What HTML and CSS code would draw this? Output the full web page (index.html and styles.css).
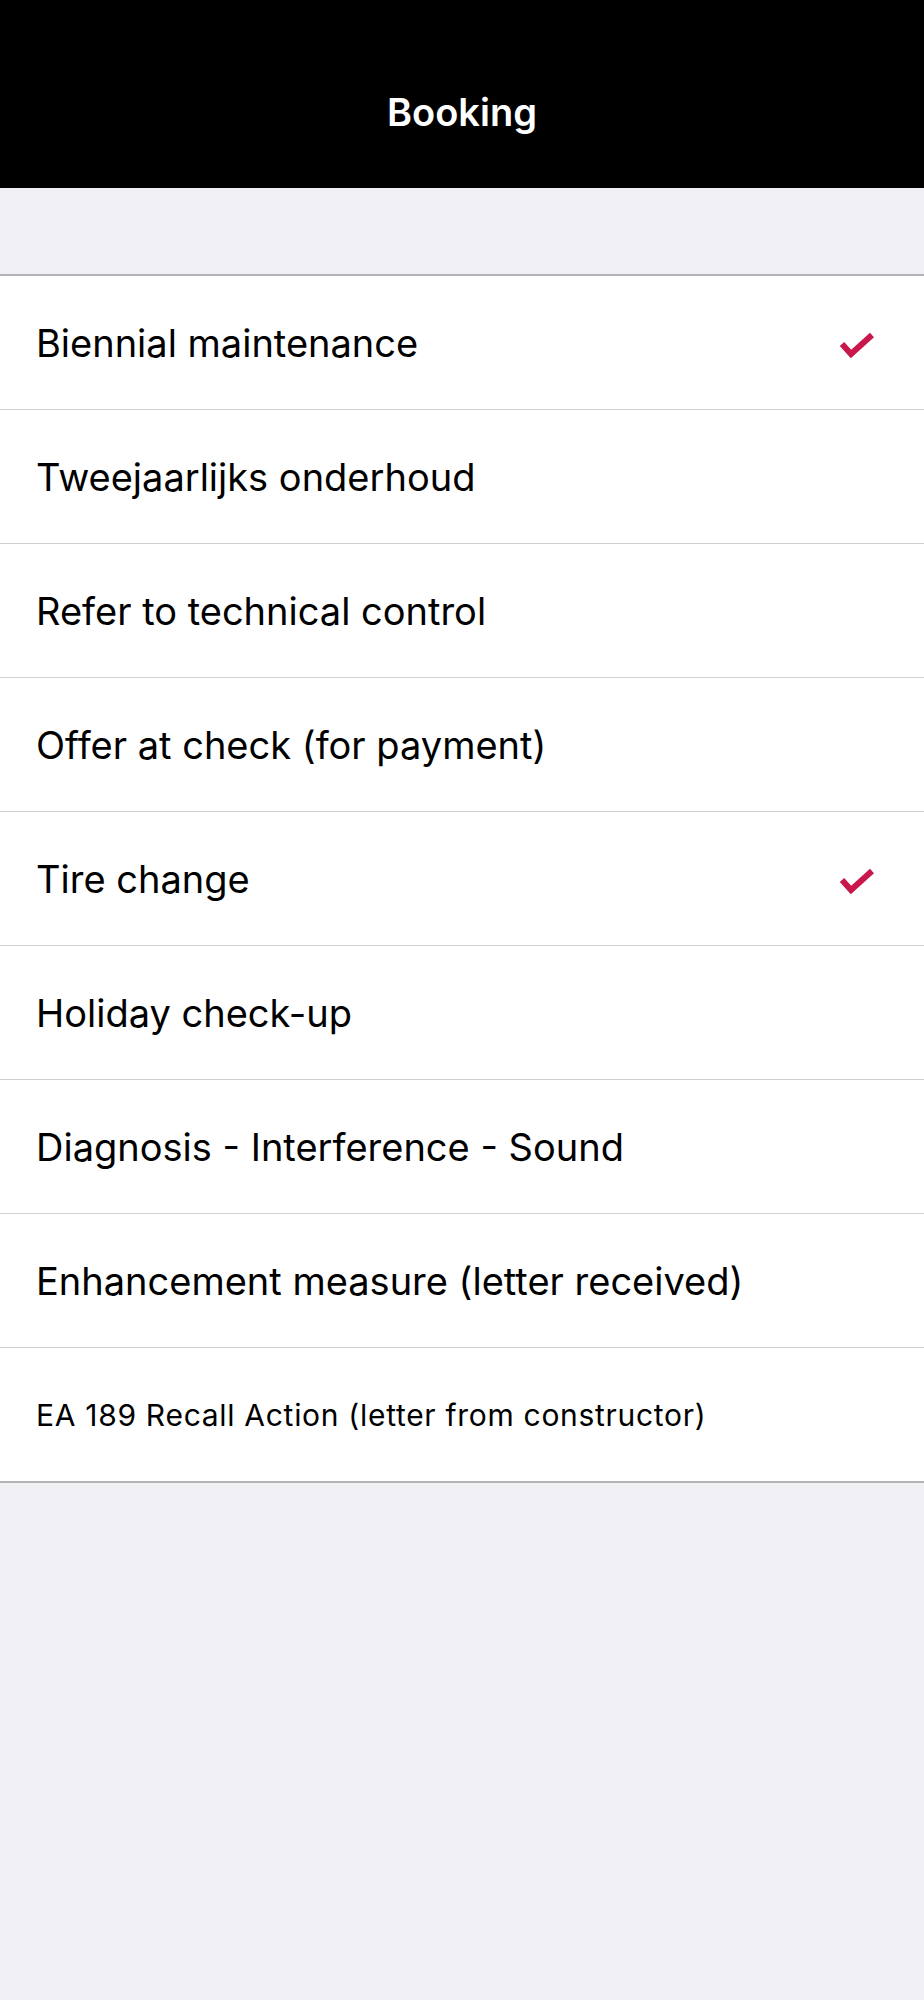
FILE: index.html
```html
<!DOCTYPE html>
<html lang="en">

<head>
    <meta charset="UTF-8">
    <meta name="viewport" content="width=device-width, initial-scale=1.0">
    <title>Booking</title>
    <link rel="stylesheet" href="styles.css">
</head>

<body>
    <header class="nav-bar">
        <h1 class="nav-title">Booking</h1>
    </header>

    <ul class="option-list">
        <li class="option">
            <span>Biennial maintenance</span>
            <svg class="check" viewBox="0 0 36 28" width="36" height="28">
                <polyline points="3,13 12,23 33,4" />
            </svg>
        </li>
        <li class="option"><span>Tweejaarlijks onderhoud</span></li>
        <li class="option"><span>Refer to technical control</span></li>
        <li class="option"><span>Offer at check (for payment)</span></li>
        <li class="option">
            <span>Tire change</span>
            <svg class="check" viewBox="0 0 36 28" width="36" height="28">
                <polyline points="3,13 12,23 33,4" />
            </svg>
        </li>
        <li class="option"><span>Holiday check-up</span></li>
        <li class="option"><span>Diagnosis - Interference - Sound</span></li>
        <li class="option"><span>Enhancement measure (letter received)</span></li>
        <li class="option small"><span>EA 189 Recall Action (letter from constructor)</span></li>
    </ul>
</body>

</html>
```

FILE: styles.css
```css
body {
    margin: 0;
    padding: 0;
    font-family: Inter, "Liberation Sans", sans-serif;
    background: #efeff4;
    min-height: 2000px;
}

.nav-bar {
    height: 188px;
    background: black;
    display: flex;
    justify-content: center;
    align-items: flex-start;
}

.nav-title {
    margin: 0;
    margin-top: 90px;
    color: white;
    font-size: 38px;
    font-weight: 600;
    line-height: 44px;
}

.option-list {
    list-style: none;
    margin: 86px 0 0 0;
    padding: 0;
    background: white;
    border-top: 2px solid #b4b4b7;
    border-bottom: 2px solid #b4b4b7;
}

.option {
    height: 133px;
    display: flex;
    align-items: center;
    justify-content: space-between;
    padding: 0 49px 0 36px;
    font-size: 38px;
    color: black;
    border-bottom: 1px solid #cfcfd2;
}

.option:last-child {
    border-bottom: none;
}

.option.small {
    font-size: 30px;
    letter-spacing: 0.7px;
}

.check {
    margin-top: 4px;
    fill: none;
    stroke: #c8174a;
    stroke-width: 6;
}
```
